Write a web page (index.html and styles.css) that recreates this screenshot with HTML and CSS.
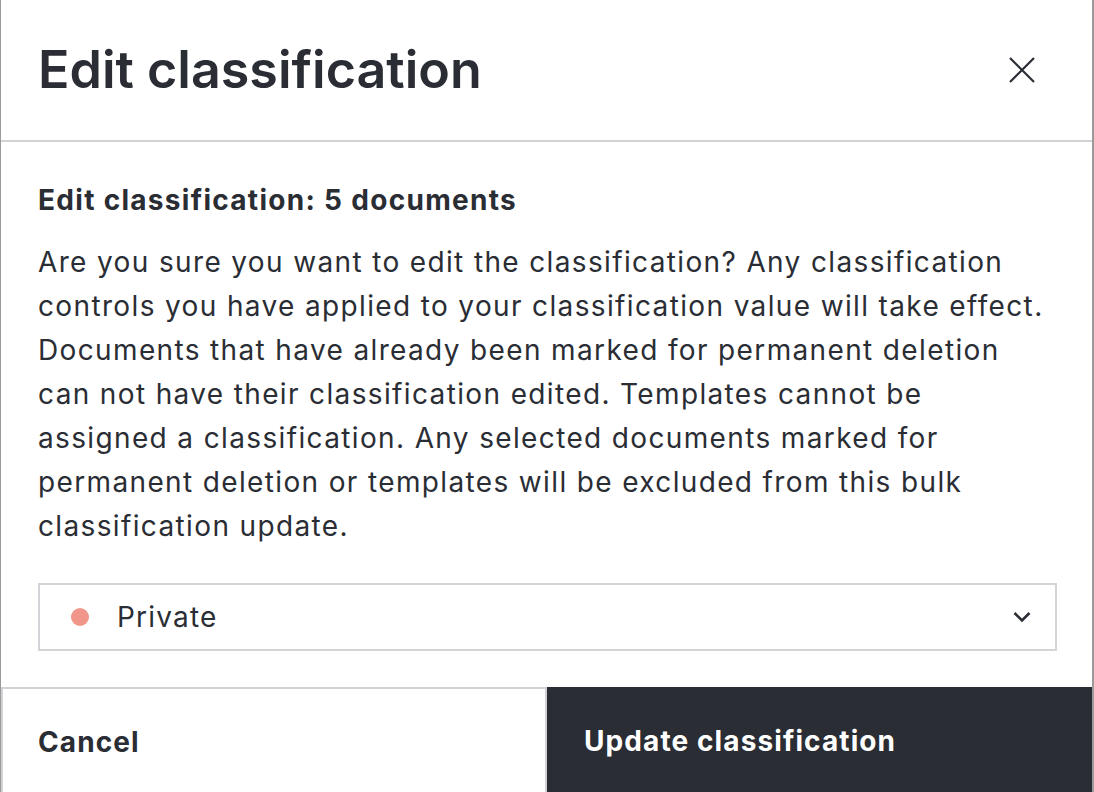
FILE: index.html
```html
<!DOCTYPE html>
<html lang="en">
<head>
<meta charset="utf-8">
<title>Edit classification</title>
<link rel="stylesheet" href="styles.css">
</head>
<body>
<div class="dialog">
  <header class="dialog-header">
    <h1 class="dialog-title">Edit classification</h1>
    <button class="close-btn" aria-label="Close">
      <svg width="28" height="28" viewBox="0 0 28 28"><path d="M2 2 L26 26 M26 2 L2 26" stroke="#2a2d34" stroke-width="2.2" fill="none"/></svg>
    </button>
  </header>
  <section class="dialog-body">
    <h2 class="subtitle">Edit classification: 5 documents</h2>
    <p class="message">Are you sure you want to edit the classification? Any classification controls you have applied to your classification value will take effect. Documents that have already been marked for permanent deletion can not have their classification edited. Templates cannot be assigned a classification. Any selected documents marked for permanent deletion or templates will be excluded from this bulk classification update.</p>
    <div class="select">
      <span class="dot"></span>
      <span class="select-label">Private</span>
      <svg class="chevron" width="18" height="12" viewBox="0 0 18 12"><path d="M1.5 2 L9 9.5 L16.5 2" stroke="#2a2d34" stroke-width="2.6" fill="none"/></svg>
    </div>
  </section>
  <footer class="dialog-footer">
    <button class="btn btn-cancel">Cancel</button>
    <button class="btn btn-primary">Update classification</button>
  </footer>
</div>
</body>
</html>
```

FILE: styles.css
```css
html, body {
  margin: 0;
  padding: 0;
  height: 100%;
  background: #ffffff;
}

body {
  font-family: "Inter", "Noto Sans", sans-serif;
  color: #2a2d34;
}

.dialog {
  box-sizing: border-box;
  width: 1094px;
  height: 792px;
  border-left: 1px solid #9a9a9a;
  border-right: 2px solid #9a9a9a;
  background: #fff;
  display: flex;
  flex-direction: column;
}

.dialog-header {
  height: 140px;
  border-bottom: 2px solid #d1d1d6;
  display: flex;
  align-items: center;
  justify-content: space-between;
  padding: 0 56px 0 37px;
}

.dialog-title {
  margin: 0;
  font-size: 52px;
  font-weight: 600;
  letter-spacing: 0;
  line-height: 1;
  padding-bottom: 0;
}

.close-btn {
  background: none;
  border: 0;
  padding: 0;
  width: 28px;
  height: 28px;
  display: flex;
  cursor: pointer;
}

.dialog-body {
  padding: 36px 35px 0 37px;
  flex: 1;
}

.subtitle {
  margin: 0 0 18px;
  font-size: 28px;
  font-weight: 700;
  line-height: 44px;
  letter-spacing: 1.3px;
}

.message {
  margin: 0;
  font-size: 28px;
  line-height: 44px;
  font-weight: 400;
  letter-spacing: 1.36px;
}

.select {
  margin-top: 35px;
  height: 68px;
  box-sizing: border-box;
  border: 2px solid #d3d3d8;
  display: flex;
  align-items: center;
  padding: 0 24px 0 31px;
}

.dot {
  width: 18px;
  height: 18px;
  border-radius: 50%;
  background: #f0968a;
  margin-right: 28px;
}

.select-label {
  font-size: 28px;
  letter-spacing: 1.2px;
  flex: 1;
}

.chevron {
  display: block;
}

.dialog-footer {
  display: flex;
  height: 105px;
}

.btn {
  font-family: inherit;
  font-size: 28px;
  font-weight: 700;
  letter-spacing: 1.1px;
  text-align: left;
  cursor: pointer;
  margin: 0;
  box-sizing: border-box;
}

.btn-cancel {
  width: 546px;
  background: #fff;
  color: #2a2d34;
  border: 2px solid #d1d1d6;
  border-bottom: 0;
  padding: 2px 0 0 35px;
}

.btn-primary {
  flex: 1;
  background: #2a2d34;
  color: #fff;
  border: 0;
  padding: 2px 0 0 37px;
}
```
